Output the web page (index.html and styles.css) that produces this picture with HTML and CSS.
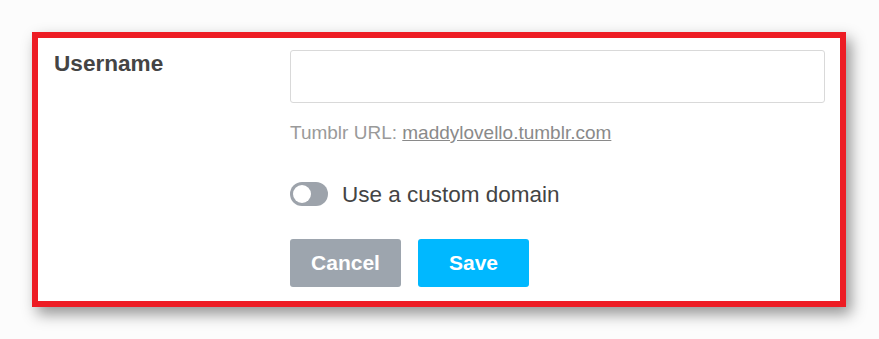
FILE: index.html
```html
<!DOCTYPE html>
<html>
<head>
<meta charset="utf-8">
<link rel="stylesheet" href="styles.css">
</head>
<body>
<div class="card">
  <div class="label">Username</div>
  <div class="fields">
    <input class="input" type="text">
    <div class="url">Tumblr URL: <a class="link">maddylovello.tumblr.com</a></div>
    <div class="toggle-row">
      <span class="toggle"><span class="knob"></span></span>
      <span class="toggle-text">Use a custom domain</span>
    </div>
    <div class="buttons">
      <button class="btn cancel">Cancel</button>
      <button class="btn save">Save</button>
    </div>
  </div>
</div>
</body>
</html>
```
FILE: styles.css
```css
html, body {
  margin: 0;
  background: #fcfcfc;
}
body {
  padding: 32px;
  font-family: "Liberation Sans", Arial, sans-serif;
}
.card {
  box-sizing: border-box;
  width: 814px;
  height: 275px;
  border: 6px solid #ed1c24;
  background: #fff;
  box-shadow: 5px 7px 14px rgba(0, 0, 0, 0.42);
  display: flex;
  padding: 12px 15px 0 16px;
}
.label {
  width: 236px;
  font-size: 22.6px;
  font-weight: bold;
  color: #444;
  line-height: 26px;
  padding-top: 1px;
}
.fields {
  flex: 1;
  display: flex;
  flex-direction: column;
}
.input {
  box-sizing: border-box;
  width: 535px;
  height: 53px;
  border: 1px solid #d9d9d9;
  border-radius: 3px;
  margin: 0;
  outline: none;
}
.url {
  margin-top: 19px;
  font-size: 19px;
  line-height: 22px;
  color: #9a9a9a;
}
.link {
  color: #8a8a8a;
  text-decoration: underline;
}
.toggle-row {
  display: flex;
  align-items: center;
  margin-top: 38px;
  height: 24px;
}
.toggle {
  width: 38px;
  height: 24px;
  border-radius: 12px;
  background: #9da3ab;
  display: flex;
  align-items: center;
  padding-left: 3px;
  box-sizing: border-box;
}
.knob {
  width: 18px;
  height: 18px;
  border-radius: 50%;
  background: #fff;
}
.toggle-text {
  margin-left: 14px;
  font-size: 22.5px;
  color: #444;
  position: relative;
  top: 1px;
}
.buttons {
  display: flex;
  gap: 17px;
  margin-top: 33px;
}
.btn {
  width: 111px;
  height: 48px;
  border: none;
  border-radius: 3px;
  color: #fff;
  font-family: "Liberation Sans", Arial, sans-serif;
  font-size: 21px;
  font-weight: bold;
  padding: 0;
}
.cancel {
  background: #9da5ae;
}
.save {
  background: #00b8ff;
}
```
